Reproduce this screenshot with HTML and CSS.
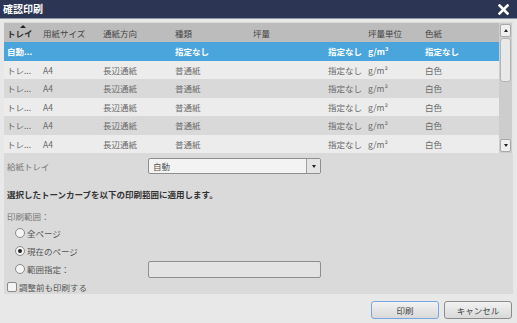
FILE: index.html
```html
<!DOCTYPE html>
<html lang="ja">
<head>
    <meta charset="UTF-8">
    <title>確認印刷</title>
    <link rel="stylesheet" href="styles.css">
</head>
<body>
    <div class="dialog">
        <div class="titlebar">
            <span class="title">確認印刷</span>
            <svg class="close" width="11" height="11" viewBox="0 0 11 11">
                <path d="M1.5 1.5 L9.5 9.5 M9.5 1.5 L1.5 9.5" stroke="#fff" stroke-width="2.6" stroke-linecap="square"/>
            </svg>
        </div>

        <div class="panel">
            <div class="grid-wrap">
                <table class="grid">
                    <colgroup>
                        <col style="width:36px">
                        <col style="width:60px">
                        <col style="width:72px">
                        <col style="width:78px">
                        <col style="width:115px">
                        <col style="width:57px">
                        <col style="width:77px">
                    </colgroup>
                    <thead>
                        <tr>
                            <th class="sorted">トレイ<span class="sort-arrow"></span></th>
                            <th>用紙サイズ</th>
                            <th>通紙方向</th>
                            <th>種類</th>
                            <th>坪量</th>
                            <th>坪量単位</th>
                            <th>色紙</th>
                        </tr>
                    </thead>
                    <tbody>
                        <tr class="selected">
                            <td>自動...</td><td></td><td></td><td>指定なし</td>
                            <td class="num">指定なし</td><td>g/m²</td><td>指定なし</td>
                        </tr>
                        <tr>
                            <td>トレ...</td><td>A4</td><td>長辺通紙</td><td>普通紙</td>
                            <td class="num">指定なし</td><td>g/m²</td><td>白色</td>
                        </tr>
                        <tr>
                            <td>トレ...</td><td>A4</td><td>長辺通紙</td><td>普通紙</td>
                            <td class="num">指定なし</td><td>g/m²</td><td>白色</td>
                        </tr>
                        <tr>
                            <td>トレ...</td><td>A4</td><td>長辺通紙</td><td>普通紙</td>
                            <td class="num">指定なし</td><td>g/m²</td><td>白色</td>
                        </tr>
                        <tr>
                            <td>トレ...</td><td>A4</td><td>長辺通紙</td><td>普通紙</td>
                            <td class="num">指定なし</td><td>g/m²</td><td>白色</td>
                        </tr>
                        <tr>
                            <td>トレ...</td><td>A4</td><td>長辺通紙</td><td>普通紙</td>
                            <td class="num">指定なし</td><td>g/m²</td><td>白色</td>
                        </tr>
                    </tbody>
                </table>
                <div class="scrollbar">
                    <div class="scroll-btn"><span class="tri up"></span></div>
                    <div class="scroll-track">
                        <div class="scroll-thumb"></div>
                    </div>
                    <div class="scroll-btn"><span class="tri down"></span></div>
                </div>
            </div>

            <div class="field-row">
                <span class="field-label">給紙トレイ</span>
                <div class="select">
                    <span class="select-value">自動</span>
                    <span class="select-btn"><span class="tri down"></span></span>
                </div>
            </div>

            <div class="note">選択したトーンカーブを以下の印刷範囲に適用します。</div>
            <div class="range-label">印刷範囲：</div>

            <div class="radio-row">
                <span class="radio"></span><span>全ページ</span>
            </div>
            <div class="radio-row">
                <span class="radio checked"></span><span>現在のページ</span>
            </div>
            <div class="radio-row">
                <span class="radio"></span><span class="radio-text">範囲指定：</span>
                <span class="text-input"></span>
            </div>

            <div class="check-row">
                <span class="checkbox"></span><span>調整前も印刷する</span>
            </div>
        </div>

        <div class="footer">
            <button class="focused">印刷</button>
            <button>キャンセル</button>
        </div>
    </div>
</body>
</html>
```

FILE: styles.css
```css
body {
    margin: 0;
    background: #e8e8e8;
    font-family: "Noto Sans CJK JP", "Noto Sans", sans-serif;
    font-size: 8.5px;
    color: #555;
}

.dialog {
    width: 517px;
    height: 323px;
    overflow: hidden;
}

.titlebar {
    height: 18px;
    background: #2c3553;
    border-bottom: 1px solid #8d93a6;
    display: flex;
    align-items: center;
    justify-content: space-between;
    padding: 0 8px 0 3px;
}

.title {
    color: #fff;
    font-weight: bold;
    font-size: 10px;
    line-height: 18px;
}

.panel {
    margin: 3px 4px 0 4px;
    height: 272px;
    background: #dadada;
    padding-top: 1px;
    box-sizing: border-box;
}

.grid-wrap {
    display: flex;
}

.grid {
    width: 495px;
    border-collapse: collapse;
    table-layout: fixed;
}

.grid th,
.grid td {
    padding: 0 3px;
    text-align: left;
    white-space: nowrap;
    overflow: hidden;
}

.grid th {
    height: 19px;
    background: #bcbcbc;
    font-weight: normal;
    color: #444;
}

.grid th.sorted {
    position: relative;
    font-weight: bold;
    color: #333;
}

.sort-arrow {
    position: absolute;
    left: 16px;
    top: 2px;
    border-left: 3px solid transparent;
    border-right: 3px solid transparent;
    border-bottom: 3px solid #222;
}

.grid td {
    height: 18px;
    color: #6a6a6a;
}

.grid td.num {
    text-align: right;
}

.grid tbody tr:nth-child(even) td {
    background: #ececec;
}

.grid tbody tr:nth-child(odd) td {
    background: #d9d9d9;
}

.grid tbody tr.selected td {
    background: #4ba5dd;
    color: #fff;
    font-weight: bold;
}

.scrollbar {
    width: 14px;
    height: 130px;
    background: #cdcdcd;
    display: flex;
    flex-direction: column;
    padding: 1px 0;
    box-sizing: border-box;
    border-right: 1px solid #e6e6e6;
}

.scroll-btn {
    height: 13px;
    margin: 0 1px;
    background: #efefef;
    border: 1px solid #a8a8a8;
    border-radius: 2px;
    box-sizing: border-box;
    display: flex;
    align-items: center;
    justify-content: center;
}

.scroll-track {
    flex: 1;
}

.scroll-thumb {
    height: 44px;
    margin: 1px 1px 0;
    background: #e9e9e9;
    border: 1px solid #b4b4b4;
    border-radius: 3px;
    box-sizing: border-box;
}

.tri {
    display: block;
    border-left: 2.5px solid transparent;
    border-right: 2.5px solid transparent;
}

.tri.up {
    border-bottom: 3px solid #222;
}

.tri.down {
    border-top: 3px solid #222;
}

.field-row {
    display: flex;
    align-items: center;
    height: 16px;
    margin-top: 5px;
    padding-left: 3px;
}

.field-label {
    width: 141px;
    color: #777;
}

.select {
    width: 173px;
    height: 16px;
    display: flex;
    background: #f3f3f3;
    border: 1px solid #8f8f8f;
    border-radius: 2px;
    box-sizing: border-box;
}

.select-value {
    flex: 1;
    padding-left: 4px;
    line-height: 14px;
    color: #555;
}

.select-btn {
    width: 13px;
    border-left: 1px solid #a0a0a0;
    background: #e4e4e4;
    display: flex;
    align-items: center;
    justify-content: center;
}

.note {
    margin-top: 12px;
    padding-left: 3px;
    line-height: 16px;
    font-weight: bold;
    color: #333;
}

.range-label {
    margin-top: 6px;
    padding-left: 3px;
    line-height: 16px;
    color: #777;
}

.radio-row {
    display: flex;
    align-items: center;
    height: 18px;
    padding-left: 11px;
    color: #555;
}

.radio {
    width: 10px;
    height: 10px;
    border: 1px solid #8a8a8a;
    border-radius: 50%;
    background: #f4f4f4;
    box-sizing: border-box;
    margin-right: 2px;
    display: flex;
    align-items: center;
    justify-content: center;
}

.radio.checked::after {
    content: "";
    width: 4px;
    height: 4px;
    border-radius: 50%;
    background: #222;
}

.radio-text {
    width: 121px;
}

.text-input {
    width: 173px;
    height: 17px;
    background: #e3e3e3;
    border: 1px solid #8f8f8f;
    border-radius: 2px;
    box-sizing: border-box;
}

.check-row {
    display: flex;
    align-items: center;
    height: 16px;
    margin-top: 1px;
    padding-left: 3px;
    color: #555;
}

.checkbox {
    width: 10px;
    height: 10px;
    border: 1px solid #8a8a8a;
    border-radius: 2px;
    background: #f4f4f4;
    box-sizing: border-box;
    margin-right: 2px;
}

.footer {
    display: flex;
    justify-content: flex-end;
    gap: 5px;
    padding: 7px 5px 0 0;
}

button {
    width: 68px;
    height: 18px;
    font-family: inherit;
    font-size: 8.5px;
    color: #444;
    background: linear-gradient(#f2f2f2, #d9d9d9);
    border: 1px solid #8c8c8c;
    border-radius: 3px;
    padding: 0;
}

button.focused {
    border-color: #79a6e0;
}
```
